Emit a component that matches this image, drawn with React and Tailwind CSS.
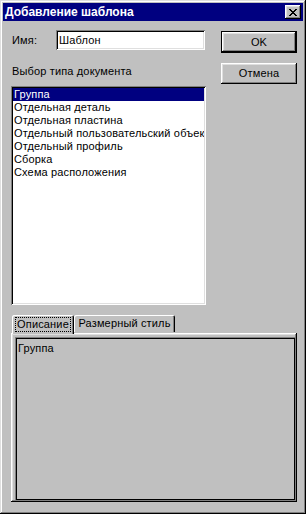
import React from 'react';

const items = [
  'Группа',
  'Отдельная деталь',
  'Отдельная пластина',
  'Отдельный пользовательский объект',
  'Отдельный профиль',
  'Сборка',
  'Схема расположения',
];

const raised =
  'shadow-[inset_-1px_-1px_#000,inset_1px_1px_#fff,inset_-2px_-2px_#808080,inset_2px_2px_#dfdfdf]';
const sunken =
  'shadow-[inset_1px_1px_#808080,inset_-1px_-1px_#fff,inset_2px_2px_#000,inset_-2px_-2px_#dfdfdf]';

const CloseGlyph = () => {
  const rows = ['11000011', '01100110', '00111100', '00011000', '00111100', '01100110', '11000011'];
  return (
    <svg width="8" height="7" viewBox="0 0 8 7" shapeRendering="crispEdges">
      {rows.map((r, y) =>
        r.split('').map((c, x) =>
          c === '1' ? <rect key={`${x}-${y}`} x={x} y={y} width="1" height="1" fill="#000" /> : null
        )
      )}
    </svg>
  );
};

const Button = ({ children, isDefault, className }) => (
  <div
    className={
      'flex items-center justify-center bg-[#c0c0c0] text-black ' +
      (isDefault
        ? 'shadow-[inset_-1px_-1px_#000,inset_1px_1px_#000,inset_-2px_-2px_#000,inset_2px_2px_#fff,inset_-3px_-3px_#808080,inset_3px_3px_#dfdfdf] '
        : raised + ' ') +
      className
    }
  >
    {children}
  </div>
);

export default function App() {
  return (
    <div
      className={
        'w-[306px] h-[514px] bg-[#c0c0c0] p-[3px] flex flex-col text-[11px] leading-[13px] tracking-[0.15px] text-black ' +
        'shadow-[inset_-1px_-1px_#000,inset_1px_1px_#dfdfdf,inset_-2px_-2px_#808080,inset_2px_2px_#fff]'
      }
      style={{ fontFamily: '"Liberation Sans", Arial, sans-serif' }}
    >
      {/* Title bar */}
      <div className="h-[18px] bg-[#000080] flex items-center justify-between pl-[2px] pr-[2px]">
        <span className="text-white font-bold text-[12px] tracking-normal">Добавление шаблона</span>
        <div className={'w-[16px] h-[14px] bg-[#c0c0c0] flex items-center justify-center ' + raised}>
          <CloseGlyph />
        </div>
      </div>

      {/* Top section */}
      <div className="flex pl-[8px]">
        <div className="w-[195px] flex flex-col">
          <div className="flex items-center mt-[9px] h-[20px]">
            <span className="w-[45px] pl-[1px]">Имя:</span>
            <div className={'w-[149px] h-[20px] bg-white flex items-center pl-[3px] ' + sunken}>
              Шаблон
            </div>
          </div>
          <div className="mt-[15px] pl-[1px] h-[13px]">Выбор типа документа</div>
          <div className={'mt-[8px] h-[219px] bg-white p-[2px] overflow-hidden ' + sunken}>
            {items.map((it, i) => (
              <div
                key={it}
                className={
                  'h-[13px] pl-[1px] whitespace-nowrap overflow-hidden ' +
                  (i === 0 ? 'bg-[#000080] text-white' : '')
                }
              >
                {it}
              </div>
            ))}
          </div>
        </div>
        <div className="ml-[15px] w-[76px] flex flex-col">
          <Button isDefault className="mt-[10px] h-[22px]">OK</Button>
          <Button className="mt-[10px] h-[21px]">Отмена</Button>
        </div>
      </div>

      {/* Tabs */}
      <div className="pl-[8px] mt-[10px] flex flex-col">
        <div className="flex items-end h-[19px] pl-[1px] relative z-10">
          <div
            className={
              'w-[62px] h-[19px] bg-[#c0c0c0] flex items-center justify-center rounded-t-[2px] ' +
              'shadow-[inset_1px_1px_#fff,inset_-1px_0_#000,inset_-2px_0_#808080]'
            }
          >
            <span className="outline-1 outline-dotted outline-black px-[1px]">Описание</span>
          </div>
          <div
            className={
              'w-[101px] h-[17px] mb-[2px] bg-[#c0c0c0] flex items-center justify-center rounded-t-[2px] ' +
              'shadow-[inset_1px_1px_#fff,inset_-1px_0_#000,inset_-2px_0_#808080]'
            }
          >
            Размерный стиль
          </div>
        </div>
        <div className={'w-[286px] h-[169px] -mt-[1px] p-[4px] pr-[2px] pb-[2px] bg-[#c0c0c0] ' + raised}>
          <div className="h-full shadow-[inset_1px_1px_#808080,inset_2px_2px_#000,inset_-1px_-1px_#000] pl-[3px] pt-[5px]">
            Группа
          </div>
        </div>
      </div>
    </div>
  );
}
